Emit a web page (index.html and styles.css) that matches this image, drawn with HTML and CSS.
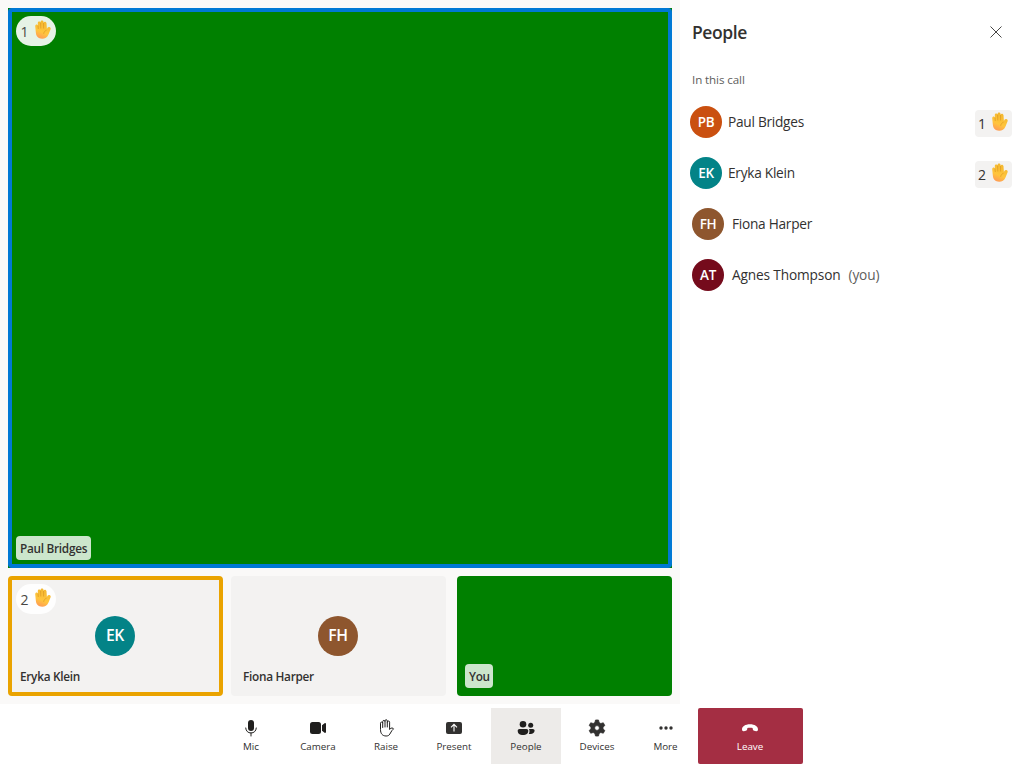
FILE: index.html
```html
<!DOCTYPE html>
<html lang="en">
<head>
<meta charset="utf-8">
<title>Group call</title>
<link rel="stylesheet" href="styles.css">
</head>
<body>
<svg class="defs" aria-hidden="true">
  <defs>
    <linearGradient id="skin" x1="0.7" y1="0" x2="0.35" y2="1">
      <stop offset="0" stop-color="#f2b52c"/>
      <stop offset="0.65" stop-color="#ffc53d"/>
      <stop offset="1" stop-color="#ff9c55"/>
    </linearGradient>
    <symbol id="hand" viewBox="0 0 16 19">
      <path fill="url(#skin)" d="M.2 6.200C.2 4.200 2.500 3.900 2.900 5.600L2.800 3C2.900 1.100 5.200 1.200 5.500 2.600L5.600 1.700C5.800 0 8.100 0 8.400 1.500L8.700 2.700C9 1.200 11.300 1.400 11.500 3.300L11.900 9C12.400 7.900 12.900 7.200 13.800 7.100C15.300 6.900 16 8 15.600 9.200L13.500 14.600C12.200 17.600 10 18.700 7.200 18.700C3.200 18.700 1.200 16.300.9 13Z"/>
      <path fill="none" stroke="#d99522" stroke-width=".65" d="M3 5.500l.3 3.500M5.600 2.800l.2 5.700M8.500 3l.1 5.500M11.500 10.300c-1.800.6-2.700 1.900-2.800 3.500"/>
    </symbol>
  </defs>
</svg>
<div class="app">
  <div class="workspace">
    <main class="stage">
      <section class="tile tile-main">
        <span class="raised"><b>1</b><svg><use href="#hand"/></svg></span>
        <span class="name name-video">Paul Bridges</span>
      </section>
      <div class="strip">
        <section class="tile tile-raised">
          <span class="raised"><b>2</b><svg><use href="#hand"/></svg></span>
          <span class="avatar avatar-large teal">EK</span>
          <span class="name">Eryka Klein</span>
        </section>
        <section class="tile">
          <span class="avatar avatar-large brown">FH</span>
          <span class="name">Fiona Harper</span>
        </section>
        <section class="tile tile-video">
          <span class="name name-video name-you">You</span>
        </section>
      </div>
    </main>
    <aside class="people">
      <header class="people-head">
        <h2>People</h2>
        <svg class="close" viewBox="0 0 12 12"><path d="M.5.5l11 11M11.500.5l-11 11"/></svg>
      </header>
      <p class="subhead">In this call</p>
      <ul class="roster">
        <li class="hand-up"><span class="avatar orange">PB</span><span class="person">Paul Bridges</span><span class="order"><b>1</b><svg><use href="#hand"/></svg></span></li>
        <li class="hand-up"><span class="avatar teal">EK</span><span class="person">Eryka Klein</span><span class="order"><b>2</b><svg><use href="#hand"/></svg></span></li>
        <li><span class="avatar brown">FH</span><span class="person">Fiona Harper</span></li>
        <li><span class="avatar maroon">AT</span><span class="person agnes">Agnes Thompson</span><span class="you">(you)</span></li>
      </ul>
    </aside>
  </div>
  <nav class="controls">
    <button class="mic"><svg viewBox="0 0 20 20"><rect x="7" y="2" width="6" height="11" rx="3"/><path class="line" d="M4.700 10c.2 3 2.300 5 5.300 5s5.100-2 5.300-5M10 15v3"/></svg><span>Mic</span></button>
    <button class="camera"><svg viewBox="0 0 20 20"><rect x="2" y="4" width="11" height="12" rx="2.500"/><path d="M14 7.300l2.600-2c.6-.5 1.400-.2 1.400.6v8.200c0 .8-.8 1.100-1.400.6l-2.600-2z"/></svg><span>Camera</span></button>
    <button class="raise"><svg viewBox="0 0 20 20"><path class="line" d="M4.500 10.500V5.200a1.100 1.100 0 0 1 2.200 0V9.500M6.700 5V3.600a1.150 1.150 0 0 1 2.300 0V9M9 3.300v-.4a1.150 1.150 0 0 1 2.300 0V9M11.300 4.200a1.150 1.150 0 0 1 2.300 0V11.500c.8-1.200 1.900-1.900 3.500-1.200.5.200.5.700.1 1l-1.300 1.300-2.100 3.500c-.8 1.400-1.900 1.900-3.700 1.900-3.700 0-5.600-2.500-5.600-6.500v-1"/></svg><span>Raise</span></button>
    <button class="present"><svg viewBox="0 0 20 20"><rect x="2" y="4" width="16" height="12" rx="2"/><path class="cut" d="M10 13.500v-7M7 9.300l3-3 3 3"/></svg><span>Present</span></button>
    <button class="participants"><svg viewBox="0 0 20 20"><circle cx="7" cy="6.300" r="3.300"/><circle cx="14.700" cy="7.300" r="2.500"/><path d="M3.500 11h7c1 0 1.800.8 1.800 1.800 0 3-2.300 4.300-5.300 4.300s-5.300-1.300-5.300-4.300c0-1 .8-1.800 1.800-1.800zM12.900 11h3.900c1 0 1.800.8 1.800 1.600 0 2.200-1.800 3.400-4 3.400-.8 0-1.400-.1-1.800-.3.500-.8.700-1.700.7-2.700 0-.8-.2-1.400-.6-2z"/></svg><span>People</span></button>
    <button class="devices"><svg viewBox="0 0 20 20"><path fill-rule="evenodd" stroke="#323130" stroke-width=".8" stroke-linejoin="round" d="M8.500 2h3l.6 2.500 1.700 1 2.500-.7 1.500 2.700L16 9.200v1.600l1.800 1.700-1.500 2.700-2.500-.7-1.700 1-.6 2.500h-3l-.6-2.500-1.700-1-2.500.7-1.500-2.700L4 10.800V9.200L2.200 7.500l1.500-2.700 2.500.7 1.700-1zM10 7.600a2.400 2.400 0 1 0 0 4.800 2.400 2.400 0 0 0 0-4.800z"/></svg><span>Devices</span></button>
    <button class="more"><svg viewBox="0 0 20 20"><circle cx="5" cy="10" r="1.700"/><circle cx="10" cy="10" r="1.700"/><circle cx="15" cy="10" r="1.700"/></svg><span>More</span></button>
    <button class="leave"><svg viewBox="0 0 20 20"><path d="M10 6.300c4.700 0 8 2.100 8 5.200 0 1.200-.8 1.900-1.900 1.700l-2-.4c-.8-.2-1.200-.7-1.300-1.500l-.2-1.200c-1.700-.5-3.500-.5-5.200 0l-.2 1.200c-.1.800-.5 1.300-1.300 1.500l-2 .4c-1.100.2-1.900-.5-1.900-1.700 0-3.100 3.300-5.200 8-5.200z"/></svg><span>Leave</span></button>
  </nav>
</div>
</body>
</html>
```

FILE: styles.css
```css
* { box-sizing: border-box; }
body { margin: 0; color: #323130; background: #fff; font-family: "Open Sans", "Noto Sans", sans-serif; }
.defs { position: absolute; width: 0; height: 0; }
.app { width: 1024px; height: 768px; display: flex; flex-direction: column; overflow: hidden; }
.workspace { display: flex; height: 704px; }
.stage { width: 680px; padding: 8px; display: flex; flex-direction: column; gap: 8px; background: #faf9f8; }
.tile { position: relative; display: flex; align-items: center; justify-content: center; background: #f3f2f1; border-radius: 4px; height: 120px; width: 215px; }
.tile-main { width: 664px; height: 560px; background: #008000; border-radius: 0; }
.tile-main::before, .tile-raised::before { content: ""; position: absolute; inset: 0; border: 4px solid #0078d4; border-radius: 4px; }
.tile-raised::before { border-color: #eaa300; }
.tile-video { background: #008000; margin-left: auto; }
.strip { display: flex; gap: 8px; }
.raised { position: absolute; left: 8px; top: 8px; width: 40px; height: 30px; border-radius: 15px; background: rgba(255,255,255,.9); display: flex; padding: 3.500px 4.500px; gap: 6px; color: #484644; }
.raised b { font-weight: 400; font-size: 14px; line-height: 24px; width: 8px; }
.raised svg, .order svg { width: 16px; height: 19px; flex: none; }
.name { position: absolute; left: 8px; bottom: 8px; height: 24px; padding: 0 4px; border-radius: 4px; font-size: 11.8px; line-height: 24px; font-weight: 600; white-space: nowrap; letter-spacing: -.28px; }
.name-video { background: rgba(255,255,255,.8); }
.tile-main .name { width: 75px; }
.name-you { width: 28px; }
.avatar { width: 32px; height: 32px; flex: none; border-radius: 50%; color: #fff; display: flex; align-items: center; justify-content: center; font-size: 13.5px; line-height: 18px; font-weight: 600; letter-spacing: -.4px; }
.avatar-large { width: 40px; height: 40px; font-size: 15.7px; line-height: 38px; padding-bottom: 2px; margin-right: 1px; }
.teal { background: #038387; }
.brown { background: #8e562e; }
.orange { background: #ca5010; }
.maroon { background: #750b1c; }
.people { width: 344px; padding: 0 12px 0 10px; }
.people-head { height: 64px; display: flex; align-items: center; justify-content: space-between; padding: 0 10px 0 2px; }
h2 { margin: 0; font-size: 17.5px; line-height: 24px; font-weight: 600; letter-spacing: -.4px; }
.close { width: 12px; height: 12px; stroke: #323130; stroke-width: .9; fill: none; }
.subhead { margin: 8px 0 8px 2px; font-size: 11.6px; line-height: 16px; color: #605e5c; letter-spacing: -.1px; }
.roster { margin: 0; padding: 0; list-style: none; }
.roster li { height: 51px; display: flex; align-items: center; padding-left: 2px; }
.roster li.hand-up { padding-left: 0; }
.person { margin-left: 8px; font-size: 13.7px; line-height: 20px; letter-spacing: -.27px; white-space: nowrap; }
.agnes { letter-spacing: -.15px; }
.hand-up .person { margin-left: 6px; }
.you { margin-left: 8px; font-size: 13.7px; line-height: 20px; letter-spacing: -.15px; color: #605e5c; }
.order { margin-left: auto; margin-top: 3px; width: 37px; height: 27px; border-radius: 4px; background: #f3f2f1; display: flex; padding: 2px 4.500px 0 3px; justify-content: space-between; }
.order b { font-size: 14px; font-weight: 400; line-height: 24px; }
.controls { height: 64px; padding: 4px 0 4px 221px; display: flex; }
button { height: 56px; border: 0; padding: 10px 0 0; background: none; color: #323130; font-family: inherit; font-size: 9.8px; line-height: 14px; display: flex; flex-direction: column; align-items: center; gap: 2px; }
button svg { width: 20px; height: 20px; fill: #201f1e; }
.line { fill: none; stroke: #201f1e; stroke-width: 1; stroke-linecap: round; stroke-linejoin: round; }
.cut { fill: none; stroke: #fff; stroke-width: 1.1; }
.present svg, .devices svg, .more svg { fill: #323130; }
.mic { width: 60px; }
.camera { width: 74px; }
.raise { width: 62px; }
.present { width: 74px; }
.participants { width: 70px; background: #edebe9; }
.devices { width: 72px; }
.more { width: 65px; }
.leave { width: 105px; padding-right: 1px; background: #a42e43; color: #fff; border-radius: 2px; }
.leave svg { fill: #fff; }
```
